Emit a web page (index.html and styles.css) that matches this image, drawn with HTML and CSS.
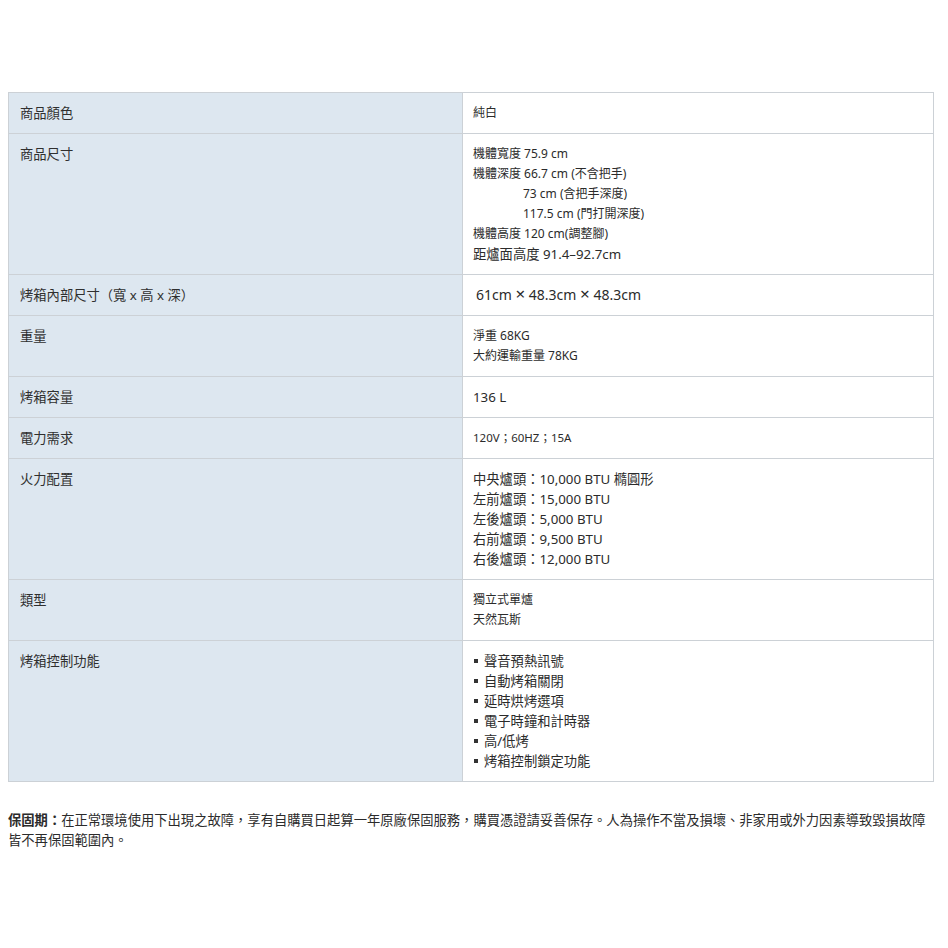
FILE: index.html
```html
<!DOCTYPE html>
<html lang="zh-Hant">
<head>
<meta charset="utf-8">
<title>規格</title>
<link rel="stylesheet" href="styles.css">
</head>
<body>
<div class="page">
  <table class="spec">
    <colgroup><col class="c-label"><col class="c-value"></colgroup>
    <tbody>
      <tr><th>商品顏色</th><td class="sm">純白</td></tr>
      <tr><th>商品尺寸</th><td class="sm">
        <div>機體寬度 75.9 cm</div>
        <div>機體深度 66.7 cm (不含把手)</div>
        <div class="indent">73 cm (含把手深度)</div>
        <div class="indent">117.5 cm (門打開深度)</div>
        <div>機體高度 120 cm(調整腳)</div>
        <div class="md">距爐面高度 91.4–92.7cm</div>
      </td></tr>
      <tr><th>烤箱內部尺寸（寬 x 高 x 深）</th><td class="lg">61cm <span class="x">×</span> 48.3cm <span class="x">×</span> 48.3cm</td></tr>
      <tr><th>重量</th><td class="sm">
        <div>淨重 68KG</div>
        <div>大約運輸重量 78KG</div>
      </td></tr>
      <tr><th>烤箱容量</th><td class="md">136 L</td></tr>
      <tr><th>電力需求</th><td class="xs">120V；60HZ；15A</td></tr>
      <tr><th>火力配置</th><td class="md">
        <div>中央爐頭：10,000 BTU 橢圓形</div>
        <div>左前爐頭：15,000 BTU</div>
        <div>左後爐頭：5,000 BTU</div>
        <div>右前爐頭：9,500 BTU</div>
        <div>右後爐頭：12,000 BTU</div>
      </td></tr>
      <tr><th>類型</th><td class="sm">
        <div>獨立式單爐</div>
        <div>天然瓦斯</div>
      </td></tr>
      <tr><th>烤箱控制功能</th><td class="md">
        <ul class="bullets">
          <li>聲音預熱訊號</li>
          <li>自動烤箱關閉</li>
          <li>延時烘烤選項</li>
          <li>電子時鐘和計時器</li>
          <li>高/低烤</li>
          <li>烤箱控制鎖定功能</li>
        </ul>
      </td></tr>
    </tbody>
  </table>
  <p class="warranty"><strong>保固期：</strong>在正常環境使用下出現之故障，享有自購買日起算一年原廠保固服務，購買憑證請妥善保存。人為操作不當及損壞、非家用或外力因素導致毀損故障皆不再保固範圍內。</p>
</div>
</body>
</html>
```

FILE: styles.css
```css
html, body {
  margin: 0;
  padding: 0;
  background: #ffffff;
}

body {
  font-family: "Noto Sans", "Noto Sans CJK TC", sans-serif;
  color: #2b2b2b;
}

.page {
  padding: 92px 15px 0 8px;
}

.spec {
  width: 925px;
  border-collapse: collapse;
  table-layout: fixed;
}

.c-label { width: 454px; }
.c-value { width: 471px; }

.spec th,
.spec td {
  border: 1px solid #ccd1d6;
  padding: 10px 10px 10px 11px;
  line-height: 20px;
  vertical-align: top;
  text-align: left;
}

.spec th {
  background: #dde7f0;
  font-weight: 400;
  font-size: 13.3px;
  color: #2f2f2f;
}

.spec td {
  background: #ffffff;
  padding-left: 10px;
}

.xs { font-size: 11.5px; }
.sm { font-size: 12px; }
.md { font-size: 13.3px; }
.lg { font-size: 14px; padding-left: 13px !important; }
.lg .x { font-size: 17px; line-height: 14px; }

.indent { padding-left: 50px; }
.sm .md { font-size: 13.3px; }

.bullets {
  list-style: none;
  margin: 0;
  padding: 0;
}

.bullets li {
  display: flex;
  align-items: center;
}

.bullets li::before {
  content: "";
  width: 4px;
  height: 4px;
  background: #333333;
  margin: 0 6px 0 1px;
  flex: none;
}

.warranty {
  margin: 28px 0 0 0;
  font-size: 13.3px;
  line-height: 20px;
  color: #2b2b2b;
}

.warranty strong {
  font-weight: 700;
}
```
